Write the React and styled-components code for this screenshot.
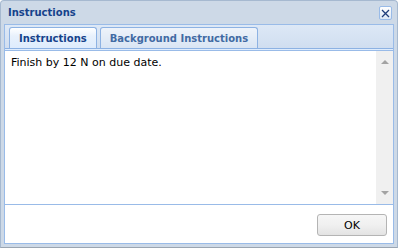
import React, { useState } from 'react';
import styled, { createGlobalStyle } from 'styled-components';

const GlobalStyle = createGlobalStyle`
  html, body {
    margin: 0;
    padding: 0;
    background: #ffffff;
  }
  * {
    box-sizing: border-box;
  }
`;

const Window = styled.div`
  display: flex;
  flex-direction: column;
  width: 398px;
  height: 248px;
  padding: 0 3px 3px 3px;
  background: #cdd9e7;
  border: 1px solid #a6b9d0;
  border-bottom-color: #9aa5b2;
  border-radius: 4px 4px 0 0;
  font-family: 'DejaVu Sans', Verdana, sans-serif;
`;

const Header = styled.div`
  display: flex;
  align-items: center;
  justify-content: space-between;
  height: 23px;
  padding: 0 2px 0 4px;
`;

const Title = styled.span`
  font-size: 10px;
  font-weight: bold;
  color: #15428b;
`;

const CloseButton = styled.button`
  display: flex;
  align-items: center;
  justify-content: center;
  width: 13px;
  height: 14px;
  padding: 0;
  margin-top: 1px;
  border: 1px solid #99bbe8;
  border-radius: 2px;
  background: linear-gradient(#ffffff, #dce7f5);
  cursor: pointer;
`;

const Panel = styled.div`
  display: flex;
  flex: 1;
  flex-direction: column;
  border: 1px solid #99bbe8;
  background: #ffffff;
`;

const TabStrip = styled.div`
  display: flex;
  gap: 3px;
  height: 24px;
  padding: 2px 0 0 4px;
  background: linear-gradient(#dde8f6, #d0def0);
  border-bottom: 1px solid #8db2e3;
`;

const Tab = styled.button`
  height: 21px;
  padding: 0 9px;
  border: 1px solid #8db2e3;
  border-bottom: none;
  border-radius: 3px 3px 0 0;
  font-family: inherit;
  font-size: 10px;
  font-weight: bold;
  color: ${(props) => (props.$active ? '#15428b' : '#416aa3')};
  background: ${(props) =>
    props.$active
      ? 'linear-gradient(#ffffff, #e8f1fc 40%, #deecfd)'
      : 'linear-gradient(#eef3fa, #d9e5f4)'};
  cursor: pointer;
`;

const StripFoot = styled.div`
  height: 2px;
  background: #deecfd;
  border-bottom: 1px solid #99bbe8;
`;

const Body = styled.div`
  display: flex;
  height: 154px;
  border-bottom: 1px solid #99bbe8;
`;

const Content = styled.div`
  flex: 1;
  padding: 5px 6px;
  font-size: 11px;
  color: #000000;
`;

const ScrollBar = styled.div`
  display: flex;
  flex-direction: column;
  justify-content: space-between;
  align-items: center;
  width: 17px;
  padding: 9px 0;
  background: #f0f0f0;
`;

const Arrow = styled.div`
  width: 0;
  height: 0;
  border-left: 4px solid transparent;
  border-right: 4px solid transparent;
  ${(props) =>
    props.$down ? 'border-top: 4px solid #a3a3a3;' : 'border-bottom: 4px solid #a3a3a3;'}
`;

const Footer = styled.div`
  display: flex;
  flex: 1;
  justify-content: flex-end;
  padding: 9px 6px 0 0;
`;

const OkButton = styled.button`
  width: 70px;
  height: 22px;
  border: 1px solid #b4b4b4;
  border-radius: 3px;
  background: linear-gradient(#f6f6f6, #f0f0f0 50%, #e3e3e3);
  font-family: inherit;
  font-size: 11px;
  color: #000000;
  cursor: pointer;
`;

const tabs = ['Instructions', 'Background Instructions'];

const App = () => {
  const [active, setActive] = useState(0);

  return (
    <>
      <GlobalStyle />
      <Window>
        <Header>
          <Title>Instructions</Title>
          <CloseButton aria-label="Close">
            <svg width="9" height="9" viewBox="0 0 9 9">
              <path d="M1 1L8 8M8 1L1 8" stroke="#1f3d7a" strokeWidth="1.3" />
            </svg>
          </CloseButton>
        </Header>
        <Panel>
          <TabStrip>
            {tabs.map((label, i) => (
              <Tab key={label} $active={i === active} onClick={() => setActive(i)}>
                {label}
              </Tab>
            ))}
          </TabStrip>
          <StripFoot />
          <Body>
            <Content>{active === 0 ? 'Finish by 12 N on due date.' : ''}</Content>
            <ScrollBar>
              <Arrow />
              <Arrow $down />
            </ScrollBar>
          </Body>
          <Footer>
            <OkButton>OK</OkButton>
          </Footer>
        </Panel>
      </Window>
    </>
  );
};

export default App;
